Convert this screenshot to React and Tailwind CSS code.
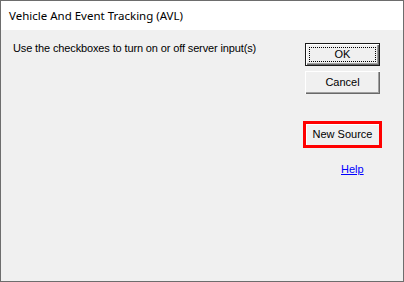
import React from 'react';

const bevel = 'shadow-[inset_1px_1px_0_#ffffff,inset_-1px_-1px_0_#696969,inset_-2px_-2px_0_#a0a0a0]';

const DialogButton = ({ children, isDefault, className = '' }) => {
    if (isDefault) {
        return (
            <button className={`w-[75px] h-[23px] border border-[#1a1a1a] bg-[#f0f0f0] p-0 ${className}`}>
                <div className={`w-full h-full p-[3px] ${bevel}`}>
                    <div className="w-full h-full border border-dotted border-black flex items-center justify-center leading-none">
                        {children}
                    </div>
                </div>
            </button>
        );
    }
    return (
        <button className={`w-[75px] h-[23px] bg-[#f0f0f0] flex items-center justify-center leading-none ${bevel} ${className}`}>
            {children}
        </button>
    );
};

const App = () => {
    return (
        <div className="w-[404px] h-[282px] border border-[#6d6d6d] flex flex-col bg-[#f0f0f0] text-black overflow-hidden">
            {/* Title bar */}
            <div className="h-[29px] bg-white flex items-center pl-[8px] text-[11.5px] font-['Noto_Sans','Open_Sans',sans-serif]">
                Vehicle And Event Tracking (AVL)
            </div>

            {/* Body */}
            <div className="flex-1 flex text-[11px] font-['Liberation_Sans',Arial,sans-serif]">
                <div className="flex-1 pl-[12px] pt-[12px] leading-[13px] tracking-[-0.13px]">
                    Use the checkboxes to turn on or off server input(s)
                </div>

                <div className="w-[79px] mr-[21px] pt-[13px] flex flex-col items-center">
                    <DialogButton isDefault>OK</DialogButton>
                    <DialogButton className="mt-[5px]">Cancel</DialogButton>

                    {/* highlighted New Source */}
                    <div className="mt-[27px] w-[79px] h-[27px] border-[3px] border-[#ff0000]">
                        <button className="w-full h-full bg-[#f0f0f0] flex items-center justify-center leading-none text-[11px] shadow-[inset_1px_1px_0_#ffffff]">
                            New Source
                        </button>
                    </div>

                    <a href="#" className="self-start ml-[38px] mt-[15px] leading-[13px] text-[#0000ff] underline">
                        Help
                    </a>
                </div>
            </div>
        </div>
    );
};

export default App;
